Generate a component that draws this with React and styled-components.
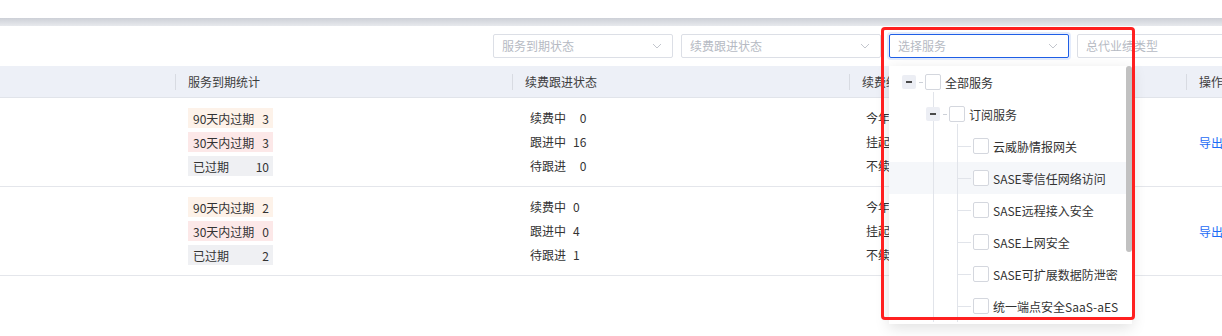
import styled, { createGlobalStyle } from "styled-components";

const GlobalStyle = createGlobalStyle`
  html {
    overflow: hidden;
  }
  body {
    margin: 0;
    padding: 0;
    background: #ffffff;
    font-family: "Noto Sans CJK SC", "Noto Sans", sans-serif;
    font-size: 12px;
    color: #333333;
  }
`;

const Page = styled.div`
  position: relative;
  width: 1306px;
  height: 336px;
  overflow: hidden;
`;

const TopBlank = styled.div`
  height: 18px;
  background: #ffffff;
`;

const ShadowBand = styled.div`
  height: 8px;
  background: linear-gradient(#cdd0d7, #e7e9ed);
`;

const FilterBar = styled.div`
  display: flex;
  align-items: flex-start;
  gap: 8px;
  height: 40px;
  box-sizing: border-box;
  padding: 8px 0 0 493px;
`;

const SelectWrap = styled.div`
  position: relative;
`;

const Select = styled.div`
  width: ${({ $w }) => $w}px;
  height: 24px;
  box-sizing: border-box;
  display: flex;
  align-items: center;
  justify-content: space-between;
  padding: 0 10px 0 8px;
  border: 1px solid ${({ $focused }) => ($focused ? "#1f5fe6" : "#dcdfe6")};
  box-shadow: ${({ $focused }) => ($focused ? "0 0 0 2px rgba(31, 95, 230, 0.12)" : "none")};
  border-radius: 2px;
  background: #fff;
  color: #b6bac3;
  font-size: 12px;
  line-height: 22px;
`;

const Chevron = () => (
  <svg width="10" height="6" viewBox="0 0 10 6">
    <polyline points="1,1 5,5 9,1" fill="none" stroke="#c3c6cd" strokeWidth="1" />
  </svg>
);

const Panel = styled.div`
  position: absolute;
  top: calc(100% + 8px);
  left: 0;
  width: 243px;
  height: 258px;
  background: #ffffff;
  box-shadow: 0 4px 14px rgba(0, 0, 0, 0.12);
  overflow: hidden;
  z-index: 5;
`;

const ScrollThumb = styled.div`
  position: absolute;
  top: 0;
  right: 0;
  width: 6px;
  height: 186px;
  border-radius: 3px;
  background: #c1c1c1;
  z-index: 3;
`;

const Tree = styled.div`
  position: relative;
  margin-right: 6px;
`;

const Node = styled.div`
  position: relative;
  height: 32px;
  display: flex;
  align-items: center;
  padding-left: ${({ $indent }) => $indent}px;
  background: ${({ $hover }) => ($hover ? "#f5f7fa" : "transparent")};
  color: #333;
  white-space: nowrap;
  &::before {
    content: "";
    display: ${({ $branch }) => ($branch ? "block" : "none")};
    position: absolute;
    left: 68px;
    top: 16px;
    width: 14px;
    height: 1px;
    background: #e1e4ea;
  }
`;

const Guide = styled.span`
  position: absolute;
  left: ${({ $left }) => $left}px;
  top: ${({ $top }) => $top}px;
  bottom: 0;
  width: 1px;
  background: #e1e4ea;
  z-index: 1;
`;

const Switcher = styled.span`
  position: relative;
  z-index: 2;
  width: 14px;
  height: 14px;
  border-radius: 2px;
  background: #eceef4;
  display: flex;
  align-items: center;
  justify-content: center;
  &::after {
    content: "";
    width: 6px;
    height: 2px;
    background: #4a4a4a;
  }
`;

const Dash = styled.span`
  width: 4px;
  height: 1px;
  margin: 0 2px 0 3px;
  background: #cdd1d8;
`;

const Checkbox = styled.span`
  position: relative;
  z-index: 2;
  width: 16px;
  height: 16px;
  box-sizing: border-box;
  border: 1px solid #d4d7de;
  border-radius: 2px;
  background: #fff;
  margin-right: 4px;
  flex-shrink: 0;
`;

const Annotation = styled.div`
  position: absolute;
  left: 881px;
  top: 27px;
  width: 254px;
  height: 293px;
  box-sizing: border-box;
  border: 3px solid #ff2020;
  border-radius: 4px;
  pointer-events: none;
  z-index: 10;
`;

const Table = styled.div`
  display: grid;
  grid-template-columns: 175px 337px 337px 337px 120px;
`;

const Th = styled.div`
  position: relative;
  height: 32px;
  box-sizing: border-box;
  background: #edf0f7;
  border-bottom: 1px solid #e1e4ea;
  display: flex;
  align-items: center;
  padding-left: 13px;
  color: #3d3d3d;
  white-space: nowrap;
  overflow: hidden;
  &::before {
    content: "";
    display: ${({ $first }) => ($first ? "none" : "block")};
    position: absolute;
    left: 0;
    top: 8px;
    width: 1px;
    height: 16px;
    background: #d8dbe2;
  }
`;

const Td = styled.div`
  height: 89px;
  box-sizing: border-box;
  border-bottom: 1px solid #e4e6eb;
  white-space: nowrap;
  overflow: hidden;
`;

const TagCell = styled(Td)`
  display: flex;
  flex-direction: column;
  gap: 4px;
  padding: 10px 13px;
`;

const tones = {
  warn: "#fdf2e9",
  danger: "#fce8e8",
  muted: "#eff0f3",
};

const Tag = styled.div`
  width: 85px;
  height: 20px;
  box-sizing: border-box;
  display: flex;
  justify-content: space-between;
  align-items: center;
  padding: 0 4px 0 5px;
  background: ${({ $tone }) => tones[$tone]};
  color: #333;
`;

const StatCell = styled(Td)`
  display: grid;
  grid-template-columns: auto auto;
  justify-content: start;
  column-gap: 7px;
  align-content: start;
  padding: 8px 18px;
  line-height: 24px;
`;

const Num = styled.span`
  justify-self: end;
`;

const TextCell = styled(Td)`
  padding: 8px 17px;
  line-height: 24px;
`;

const ActionCell = styled(Td)`
  display: flex;
  align-items: center;
  padding: 0 13px;
`;

const Link = styled.span`
  color: #1d6cf5;
  cursor: pointer;
`;

const rows = [
  { expiry: [3, 3, 10], renew: [0, 16, 0], result: ["今年已续费 2", "挂起 1", "不续费 0"] },
  { expiry: [2, 0, 2], renew: [0, 4, 1], result: ["今年已续费 1", "挂起 0", "不续费 1"] },
];

const treeNodes = [
  { label: "全部服务", indent: 13, switcher: true },
  { label: "订阅服务", indent: 37, switcher: true },
  { label: "云威胁情报网关", indent: 84, branch: true },
  { label: "SASE零信任网络访问", indent: 84, branch: true, hover: true },
  { label: "SASE远程接入安全", indent: 84, branch: true },
  { label: "SASE上网安全", indent: 84, branch: true },
  { label: "SASE可扩展数据防泄密", indent: 84, branch: true },
  { label: "统一端点安全SaaS-aES", indent: 84, branch: true },
];

function App() {
  return (
    <Page>
      <GlobalStyle />
      <TopBlank />
      <ShadowBand />
      <FilterBar>
        <Select $w={180}>
          服务到期状态
          <Chevron />
        </Select>
        <Select $w={200}>
          续费跟进状态
          <Chevron />
        </Select>
        <SelectWrap>
          <Select $w={180} $focused>
            选择服务
            <Chevron />
          </Select>
          <Panel>
            <Tree>
              {treeNodes.map((n) => (
                <Node key={n.label} $indent={n.indent} $branch={n.branch} $hover={n.hover}>
                  {n.switcher && <Switcher />}
                  {n.switcher && <Dash />}
                  <Checkbox />
                  {n.label}
                </Node>
              ))}
              <Guide $left={44} $top={26} />
              <Guide $left={68} $top={58} />
            </Tree>
            <ScrollThumb />
          </Panel>
        </SelectWrap>
        <Select $w={180}>
          总代业绩类型
          <Chevron />
        </Select>
      </FilterBar>
      <Table>
        <Th $first />
        <Th>服务到期统计</Th>
        <Th>续费跟进状态</Th>
        <Th>续费结果统计</Th>
        <Th>操作</Th>
        {rows.map((r, idx) => (
          <>
            <Td key={`a${idx}`} />
            <TagCell key={`b${idx}`}>
              <Tag $tone="warn">
                <span>90天内过期</span>
                <span>{r.expiry[0]}</span>
              </Tag>
              <Tag $tone="danger">
                <span>30天内过期</span>
                <span>{r.expiry[1]}</span>
              </Tag>
              <Tag $tone="muted">
                <span>已过期</span>
                <span>{r.expiry[2]}</span>
              </Tag>
            </TagCell>
            <StatCell key={`c${idx}`}>
              <span>续费中</span>
              <Num>{r.renew[0]}</Num>
              <span>跟进中</span>
              <Num>{r.renew[1]}</Num>
              <span>待跟进</span>
              <Num>{r.renew[2]}</Num>
            </StatCell>
            <TextCell key={`d${idx}`}>
              {r.result.map((t) => (
                <div key={t}>{t}</div>
              ))}
            </TextCell>
            <ActionCell key={`e${idx}`}>
              <Link>导出</Link>
            </ActionCell>
          </>
        ))}
      </Table>
      <Annotation />
    </Page>
  );
}

export default App;
